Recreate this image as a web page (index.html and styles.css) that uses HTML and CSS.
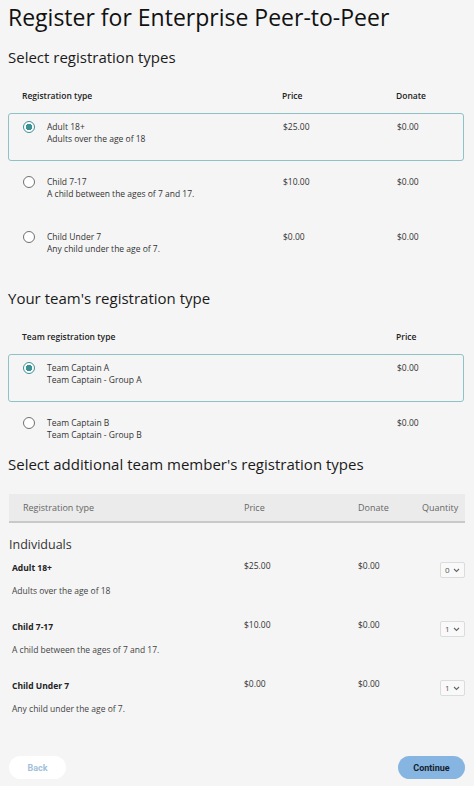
FILE: index.html
```html
<!DOCTYPE html>
<html lang="en">
<head>
    <meta charset="UTF-8">
    <meta name="viewport" content="width=device-width, initial-scale=1.0">
    <title>Register for Enterprise Peer-to-Peer</title>
    <link rel="stylesheet" href="styles.css">
</head>
<body>
    <h1 class="page-title">Register for Enterprise Peer-to-Peer</h1>

    <section class="reg-section">
        <h2 class="section-title">Select registration types</h2>
        <div class="reg-head">
            <span>Registration type</span>
            <span>Price</span>
            <span>Donate</span>
        </div>
        <div class="reg-list">
            <div class="reg-row is-selected">
                <div class="reg-name">
                    <span class="radio is-checked"></span>
                    <div class="reg-text">
                        <span>Adult 18+</span>
                        <span>Adults over the age of 18</span>
                    </div>
                </div>
                <span>$25.00</span>
                <span>$0.00</span>
            </div>
            <div class="reg-row">
                <div class="reg-name">
                    <span class="radio"></span>
                    <div class="reg-text">
                        <span>Child 7-17</span>
                        <span>A child between the ages of 7 and 17.</span>
                    </div>
                </div>
                <span>$10.00</span>
                <span>$0.00</span>
            </div>
            <div class="reg-row">
                <div class="reg-name">
                    <span class="radio"></span>
                    <div class="reg-text">
                        <span>Child Under 7</span>
                        <span>Any child under the age of 7.</span>
                    </div>
                </div>
                <span>$0.00</span>
                <span>$0.00</span>
            </div>
        </div>
    </section>

    <section class="reg-section team-section">
        <h2 class="section-title">Your team's registration type</h2>
        <div class="reg-head team-cols">
            <span>Team registration type</span>
            <span>Price</span>
        </div>
        <div class="reg-list">
            <div class="reg-row team-cols is-selected">
                <div class="reg-name">
                    <span class="radio is-checked"></span>
                    <div class="reg-text">
                        <span>Team Captain A</span>
                        <span>Team Captain - Group A</span>
                    </div>
                </div>
                <span>$0.00</span>
            </div>
            <div class="reg-row team-cols">
                <div class="reg-name">
                    <span class="radio"></span>
                    <div class="reg-text">
                        <span>Team Captain B</span>
                        <span>Team Captain - Group B</span>
                    </div>
                </div>
                <span>$0.00</span>
            </div>
        </div>
    </section>

    <section class="member-section">
        <h2 class="section-title">Select additional team member's registration types</h2>
        <div class="member-head">
            <span>Registration type</span>
            <span>Price</span>
            <span>Donate</span>
            <span>Quantity</span>
        </div>
        <h3 class="group-title">Individuals</h3>

        <div class="member-item">
            <div class="member-row">
                <span class="member-name">Adult 18+</span>
                <span>$25.00</span>
                <span>$0.00</span>
                <div class="qty">0 <svg width="7" height="5" viewBox="0 0 7 5"><path d="M1 1l2.5 2.5L6 1" fill="none" stroke="#666" stroke-width="1.1"/></svg></div>
            </div>
            <p class="member-desc">Adults over the age of 18</p>
        </div>

        <div class="member-item">
            <div class="member-row">
                <span class="member-name">Child 7-17</span>
                <span>$10.00</span>
                <span>$0.00</span>
                <div class="qty">1 <svg width="7" height="5" viewBox="0 0 7 5"><path d="M1 1l2.5 2.5L6 1" fill="none" stroke="#666" stroke-width="1.1"/></svg></div>
            </div>
            <p class="member-desc">A child between the ages of 7 and 17.</p>
        </div>

        <div class="member-item">
            <div class="member-row">
                <span class="member-name">Child Under 7</span>
                <span>$0.00</span>
                <span>$0.00</span>
                <div class="qty">1 <svg width="7" height="5" viewBox="0 0 7 5"><path d="M1 1l2.5 2.5L6 1" fill="none" stroke="#666" stroke-width="1.1"/></svg></div>
            </div>
            <p class="member-desc">Any child under the age of 7.</p>
        </div>
    </section>

    <div class="actions">
        <button class="btn btn-back">Back</button>
        <button class="btn btn-continue">Continue</button>
    </div>
</body>
</html>
```

FILE: styles.css
```css
body {
    font-family: 'Open Sans', 'Noto Sans', sans-serif;
    background-color: #f5f5f5;
    color: #333;
    margin: 0;
    padding: 0 8px 7px;
}
.page-title {
    font-size: 23px;
    font-weight: 400;
    line-height: 30px;
    color: #111;
    margin: 2px 0 0;
}
.section-title {
    font-size: 15px;
    font-weight: 500;
    line-height: 24px;
    color: #1a1a1a;
    margin: 13px 0 0;
}
.reg-head,
.reg-row {
    display: grid;
    grid-template-columns: 260px 114px 1fr;
    font-size: 8.5px;
    line-height: 12px;
}
.reg-head {
    margin-top: 19px;
    padding-left: 14px;
    line-height: 16px;
    font-weight: 600;
    color: #222;
}
.team-cols {
    grid-template-columns: 374px 1fr;
}
.reg-list {
    display: flex;
    flex-direction: column;
    gap: 7px;
    margin: 9px 2px 0 0;
}
.reg-row {
    box-sizing: border-box;
    height: 48px;
    padding: 7px 0 0 14px;
    border: 1px solid transparent;
    border-radius: 3px;
    color: #333;
}
.reg-row.is-selected {
    border-color: #8fc2c6;
}
.reg-name {
    display: flex;
    gap: 12px;
}
.reg-text {
    display: flex;
    flex-direction: column;
}
.radio {
    box-sizing: border-box;
    width: 12px;
    height: 12px;
    border: 1.5px solid #707070;
    border-radius: 50%;
    background: #fff;
}
.radio.is-checked {
    border: 1.5px solid #3a9196;
    background: radial-gradient(circle, #3a9196 0 3px, #fff 3.5px);
}
.team-section .section-title {
    margin-top: 15px;
}
.team-section .reg-row:last-child {
    height: auto;
}
.member-section .section-title {
    margin-top: 10px;
}
.member-head {
    display: grid;
    grid-template-columns: 221px 114px 64px 1fr;
    align-items: center;
    height: 27px;
    margin: 18px 1px 0;
    padding-left: 14px;
    background-color: #ebebeb;
    border-bottom: 2px solid #c9c9c9;
    font-size: 9px;
    color: #666;
}
.group-title {
    font-size: 12.5px;
    font-weight: 400;
    line-height: 20px;
    color: #333;
    margin: 12px 0 0 1px;
}
.member-item {
    margin: 4px 1px 20px;
    font-size: 8.5px;
    line-height: 14px;
}
.member-row {
    display: grid;
    grid-template-columns: 232px 114px 82px 25px;
    padding-left: 3px;
}
.member-name {
    font-weight: 700;
    padding-top: 2px;
    color: #222;
}
.qty {
    box-sizing: border-box;
    display: flex;
    align-items: center;
    justify-content: space-between;
    height: 16px;
    margin-top: 3px;
    padding: 0 4px 0 4px;
    border: 1px solid #dcdcdc;
    border-radius: 2px;
    background: #f9f9f9;
    font-size: 8px;
    color: #555;
}
.member-desc {
    margin: 6px 0 0 3px;
    color: #444;
}
.actions {
    display: flex;
    justify-content: space-between;
    margin: 40px 1px 0;
}
.btn {
    height: 23px;
    border: none;
    border-radius: 12px;
    font-family: Roboto, 'Liberation Sans', sans-serif;
    font-size: 9px;
    font-weight: 700;
    cursor: pointer;
}
.btn-back {
    width: 57px;
    background-color: #fff;
    color: #a3bfdb;
}
.btn-continue {
    width: 67px;
    background-color: #86b5e1;
    color: #16222e;
}
```
